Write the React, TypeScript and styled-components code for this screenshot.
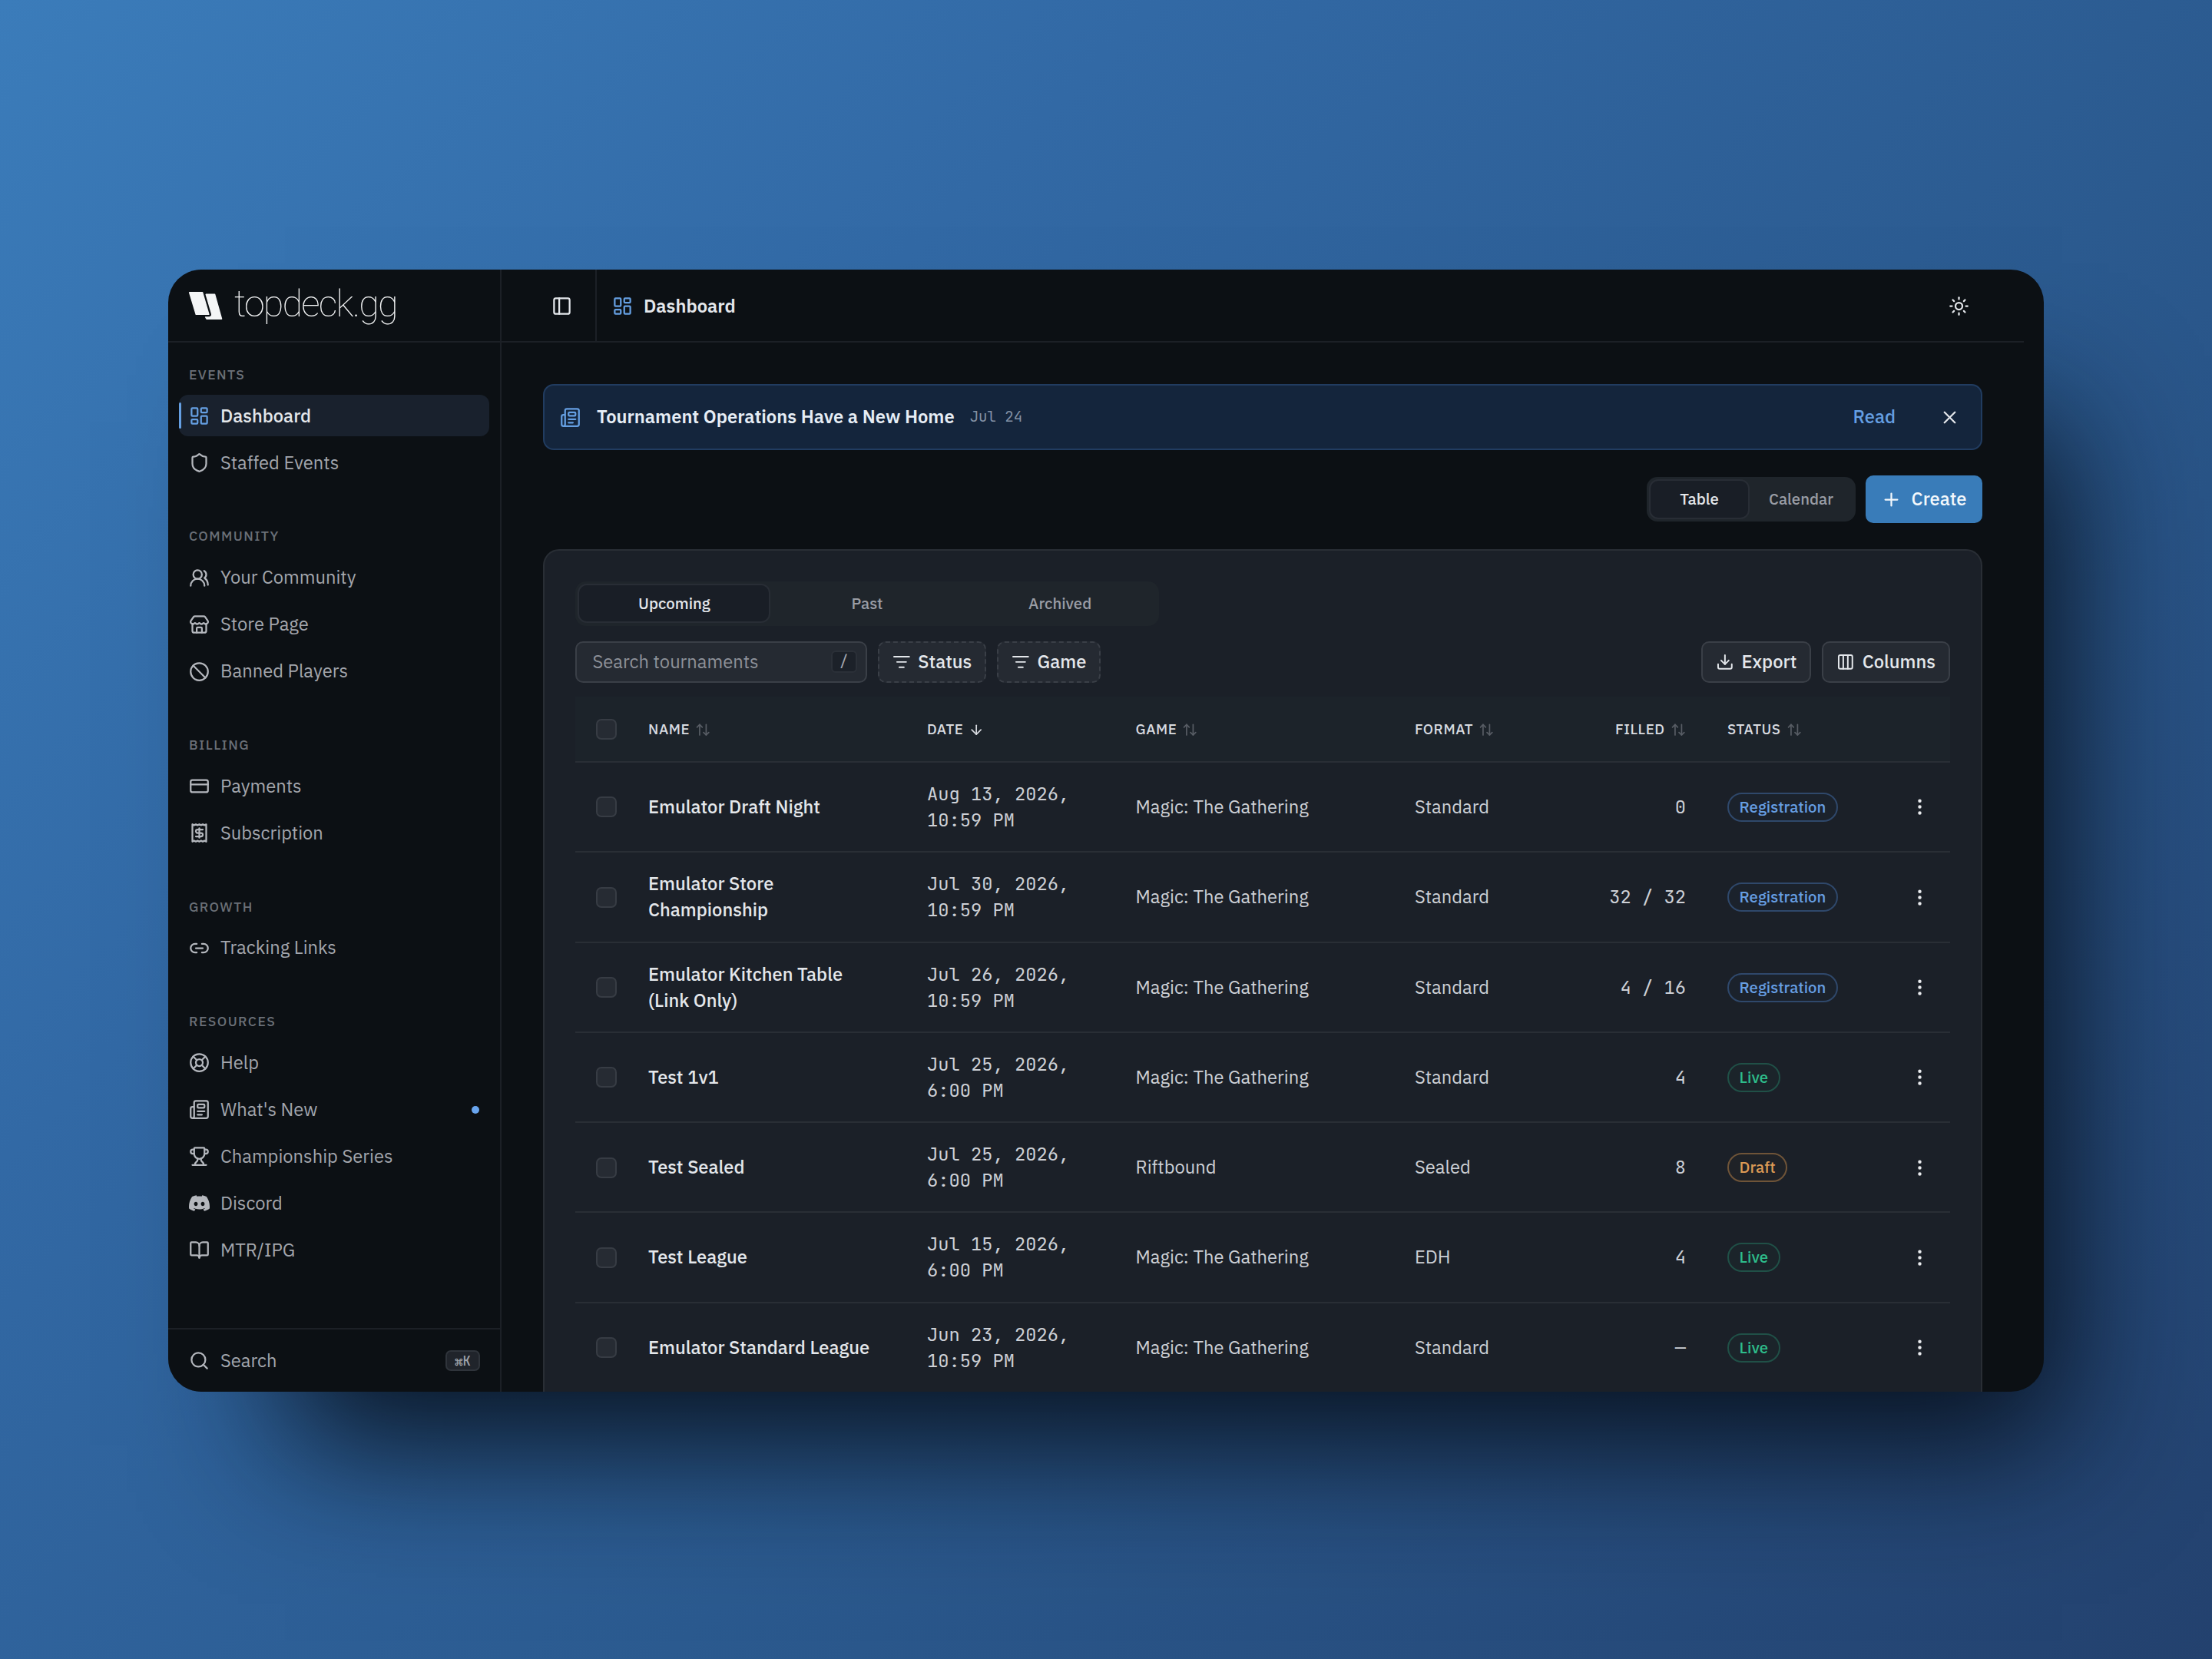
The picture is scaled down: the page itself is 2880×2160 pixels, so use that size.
import React from 'react';
import styled, { createGlobalStyle, css } from 'styled-components';
import {
  ArrowDown,
  ArrowUpDown,
  Ban,
  BookOpen,
  Columns3,
  CreditCard,
  Download,
  EllipsisVertical,
  LayoutDashboard,
  LifeBuoy,
  Link2,
  ListFilter,
  Newspaper,
  PanelLeft,
  Plus,
  Receipt,
  Search,
  Shield,
  Store,
  Sun,
  Trophy,
  UsersRound,
  X,
} from 'lucide-react';
import { SiDiscord } from 'react-icons/si';

const sans = `'IBM Plex Sans', Roboto, 'Open Sans', sans-serif`;
const mono = `'JetBrains Mono', 'Liberation Mono', monospace`;

const c = {
  bg: '#0c1014',
  line: '#1c2026',
  panel: '#1b2028',
  panelLine: '#292e35',
  tableHead: '#1c232a',
  track: '#1f252b',
  control: '#252a32',
  controlLine: '#3a3f47',
  text: '#e4e7eb',
  body: '#cdd0d6',
  nav: '#a3a6ad',
  muted: '#8d9199',
  faint: '#6b7078',
  blue: '#659fe2',
  primary: '#397cb9',
};

const GlobalStyle = createGlobalStyle`
  * { box-sizing: border-box; }
  body { margin: 0; background: #2c5c93; }
`;

/* ---------- stage and window ---------- */

const Stage = styled.div`
  width: 2880px;
  height: 2160px;
  padding: 351px 219px 0;
  overflow: hidden;
  background: linear-gradient(135deg, #3b7cba 0%, #3269a5 30%, #2b5a8f 60%, #23416e 100%);
  font-family: ${sans};
  font-size: 23.74px;
  line-height: 34px;
  color: ${c.text};
`;

const AppWindow = styled.div`
  display: flex;
  width: 2442px;
  height: 1461px;
  border-radius: 43px;
  background: ${c.bg};
  box-shadow: 88px 134px 170px -64px rgba(5, 12, 22, 0.92);
`;

/* ---------- sidebar ---------- */

const Sidebar = styled.aside`
  display: flex;
  flex-direction: column;
  flex: none;
  width: 434px;
  border-right: 2px solid ${c.line};
`;

const Brand = styled.div`
  display: flex;
  align-items: center;
  flex: none;
  height: 95px;
  gap: 14px;
  padding-left: 26px;
  border-bottom: 2px solid ${c.line};
`;

const Wordmark = styled.span`
  margin-top: -3px;
  font-family: Roboto, sans-serif;
  font-weight: 250;
  font-size: 48.5px;
  line-height: 56px;
  letter-spacing: -1.85px;
  color: #f4f5f6;
`;

const Nav = styled.nav`
  display: flex;
  flex-direction: column;
  flex: 1;
  gap: 43.1px;
  padding: 16px 14px 0 14px;
`;

const NavGroup = styled.div`
  display: flex;
  flex-direction: column;
  gap: 6.8px;
`;

const NavLabel = styled.div`
  height: 45.2px;
  padding-left: 13px;
  font-size: 17.6px;
  font-weight: 500;
  line-height: 52px;
  letter-spacing: 1.41px;
  text-transform: uppercase;
  color: ${c.faint};
`;

const NavItem = styled.a<{ $active?: boolean }>`
  position: relative;
  display: flex;
  align-items: center;
  height: 54.3px;
  gap: 14px;
  padding: 1px 13px 0 13px;
  border-radius: 12px;
  color: ${c.nav};
  svg { flex: none; color: #b4b7bd; }
  ${p => p.$active && css`
    background: #19212d;
    color: ${c.text};
    font-weight: 500;
    svg { color: ${c.blue}; }
    &::before {
      content: '';
      position: absolute;
      left: 0;
      top: 10px;
      bottom: 10px;
      width: 3.4px;
      border-radius: 3px;
      background: ${c.blue};
    }
  `}
`;

const UnreadDot = styled.span`
  width: 10px;
  height: 10px;
  margin-left: auto;
  border-radius: 50%;
  background: #69a5ef;
`;

const SidebarFooter = styled.div`
  display: flex;
  align-items: center;
  flex: none;
  height: 83px;
  gap: 14px;
  padding: 0 26px 0 27px;
  border-top: 2px solid ${c.line};
  color: ${c.nav};
  svg { color: #b4b7bd; }
`;

const Kbd = styled.kbd`
  display: flex;
  align-items: center;
  justify-content: center;
  width: 45px;
  height: 27px;
  margin-left: auto;
  border: 2px solid #2f343b;
  border-radius: 7px;
  background: #20242b;
  font: 500 17px/22px ${mono};
  color: #a2a5ac;
`;

/* ---------- main ---------- */

const Main = styled.main`
  display: flex;
  flex-direction: column;
  flex: 1;
  margin-right: 26px;
  overflow: hidden;
`;

const TopBar = styled.header`
  display: flex;
  align-items: stretch;
  flex: none;
  height: 95px;
  border-bottom: 2px solid ${c.line};
`;

const ToggleCell = styled.div`
  display: flex;
  align-items: center;
  width: 124px;
  padding: 1px 0 0 64.5px;
  border-right: 2px solid ${c.line};
`;

const PageTitle = styled.h1`
  display: flex;
  align-items: center;
  flex: 1;
  gap: 14px;
  margin: 0;
  padding: 2px 0 0 20px;
  font-size: 23.74px;
  font-weight: 600;
  svg { color: ${c.blue}; }
`;

const ThemeCell = styled.div`
  display: flex;
  align-items: center;
  padding: 1px 71px 0 0;
`;

const Content = styled.div`
  display: flex;
  flex-direction: column;
  flex: 1;
  min-height: 0;
  padding: 54px 54px 0 54px;
`;

const Banner = styled.section`
  display: flex;
  align-items: center;
  flex: none;
  height: 86px;
  padding: 0 27px 0 20px;
  border: 2px solid #213c60;
  border-radius: 14px;
  background: #14253c;
`;

const BannerTitle = styled.strong`
  margin: 0 20px 0 21px;
  font-weight: 600;
  color: #e6edf5;
`;

const BannerDate = styled.time`
  font: 400 19px/34px ${mono};
  color: #8391a4;
`;

const BannerLink = styled.a`
  margin: 0 57px 0 auto;
  font-weight: 500;
  color: ${c.blue};
`;

const Actions = styled.div`
  display: flex;
  align-items: center;
  justify-content: flex-end;
  flex: none;
  gap: 13px;
  margin: 33px 0 33.5px;
`;

const Segmented = styled.div<{ $flush?: boolean }>`
  display: flex;
  flex: none;
  width: ${p => (p.$flush ? '760px' : '272px')};
  height: 58px;
  padding: 3.4px;
  border-radius: 14px;
  background: ${c.track};
`;

const Segment = styled.div<{ $active?: boolean }>`
  display: flex;
  align-items: center;
  justify-content: center;
  flex: 1 1 auto;
  border: 2px solid transparent;
  border-radius: 12px;
  font-size: 20.35px;
  font-weight: 500;
  color: #9a9da5;
  ${p => p.$active && css`
    border-color: #282d35;
    background: #191e26;
    color: ${c.text};
  `}
`;

const ViewSegment = styled(Segment)`
  flex: none;
  width: ${p => (p.$active ? '131px' : '134px')};
`;

const TabSegment = styled(Segment)`
  flex: 1 1 0;
`;

const PrimaryButton = styled.button`
  display: flex;
  align-items: center;
  height: 62px;
  gap: 12.5px;
  padding: 0 20.5px;
  border: 0;
  border-radius: 10px;
  background: ${c.primary};
  font: 500 23.74px/34px ${sans};
  color: #f3f8fc;
`;

const Panel = styled.section`
  display: flex;
  flex-direction: column;
  flex: 1 0 auto;
  padding: 40px 40px 0;
  border: 2px solid ${c.panelLine};
  border-bottom: 0;
  border-radius: 21px 21px 0 0;
  background: ${c.panel};
`;

const Toolbar = styled.div`
  display: flex;
  align-items: center;
  gap: 13.6px;
  margin: 20.3px 0 18.4px;
`;

const Spacer = styled.span`
  flex: 1;
`;

const SearchBox = styled.label`
  display: flex;
  align-items: center;
  justify-content: space-between;
  width: 380px;
  height: 54.3px;
  padding: 0 11.5px 0 20.5px;
  border: 2px solid ${c.controlLine};
  border-radius: 10px;
  background: ${c.control};
  color: ${c.muted};
`;

const SlashKey = styled.kbd`
  display: flex;
  align-items: center;
  justify-content: center;
  width: 34px;
  height: 29px;
  border: 2px solid #2b3038;
  border-radius: 6px;
  background: #1c2129;
  font: 400 18.66px/24px ${mono};
  color: #a5a8af;
`;

const ToolButton = styled.button<{ $dashed?: boolean }>`
  display: flex;
  align-items: center;
  height: 54.3px;
  gap: 10px;
  padding: 0 17px;
  border: 2px ${p => (p.$dashed ? 'dashed' : 'solid')} ${c.controlLine};
  border-radius: 10px;
  background: ${c.control};
  font: 500 23.74px/34px ${sans};
  color: ${c.text};
`;

/* ---------- table ---------- */

const gridColumns = css`
  display: grid;
  grid-template-columns: 68px 363px 271.5px 363.5px 203.5px 203.5px 237.5px 79px;
  align-items: center;
`;

const HeadRow = styled.div`
  ${gridColumns}
  height: 85.5px;
  border-bottom: 2px solid ${c.panelLine};
  background: ${c.tableHead};
`;

const Row = styled.div`
  ${gridColumns}
  height: 117.3px;
  padding-top: 0.6px;
  border-bottom: 2px solid ${c.panelLine};
`;

const HeadCell = styled.div<{ $end?: boolean; $sorted?: boolean }>`
  display: flex;
  align-items: center;
  justify-content: ${p => (p.$end ? 'flex-end' : 'flex-start')};
  gap: 7px;
  padding: 0 27px;
  font-size: 18.66px;
  font-weight: 500;
  letter-spacing: 0.56px;
  color: #d8dbe0;
  svg {
    flex: none;
    margin-top: 1.5px;
    color: ${p => (p.$sorted ? '#d8dbe0' : '#585d65')};
  }
`;

const Cell = styled.div<{ $strong?: boolean; $mono?: boolean; $end?: boolean }>`
  padding: 0 27px;
  color: ${p => (p.$strong ? c.text : c.body)};
  font-weight: ${p => (p.$strong ? 500 : 400)};
  font-family: ${p => (p.$mono ? mono : sans)};
  text-align: ${p => (p.$end ? 'right' : 'left')};
`;

const MenuCell = styled.div`
  display: flex;
  justify-content: center;
  color: #e9ebee;
`;

const Checkbox = styled.span`
  display: block;
  width: 27px;
  height: 27px;
  border: 2px solid #373c44;
  border-radius: 7px;
  background: #262b33;
`;

type Tone = 'Registration' | 'Live' | 'Draft';

const tones: Record<Tone, { text: string; line: string; fill: string }> = {
  Registration: { text: '#669ee2', line: '#2f486b', fill: '#1b222c' },
  Live: { text: '#2ebd8b', line: '#205047', fill: '#1b242a' },
  Draft: { text: '#dd9a55', line: '#6f5438', fill: '#1f2227' },
};

const Badge = styled.span<{ $tone: Tone }>`
  display: inline-flex;
  align-items: center;
  height: 38px;
  padding: 0 13.6px;
  border: 2px solid ${p => tones[p.$tone].line};
  border-radius: 19px;
  background: ${p => tones[p.$tone].fill};
  font-size: 20.35px;
  font-weight: 500;
  color: ${p => tones[p.$tone].text};
  vertical-align: middle;
`;

/* ---------- data ---------- */

type Icon = React.ComponentType<{ size?: number }>;

const groups: { label: string; items: { icon: Icon; text: string; active?: boolean; unread?: boolean }[] }[] = [
  {
    label: 'Events',
    items: [
      { icon: LayoutDashboard, text: 'Dashboard', active: true },
      { icon: Shield, text: 'Staffed Events' },
    ],
  },
  {
    label: 'Community',
    items: [
      { icon: UsersRound, text: 'Your Community' },
      { icon: Store, text: 'Store Page' },
      { icon: Ban, text: 'Banned Players' },
    ],
  },
  {
    label: 'Billing',
    items: [
      { icon: CreditCard, text: 'Payments' },
      { icon: Receipt, text: 'Subscription' },
    ],
  },
  { label: 'Growth', items: [{ icon: Link2, text: 'Tracking Links' }] },
  {
    label: 'Resources',
    items: [
      { icon: LifeBuoy, text: 'Help' },
      { icon: Newspaper, text: "What's New", unread: true },
      { icon: Trophy, text: 'Championship Series' },
      { icon: SiDiscord as Icon, text: 'Discord' },
      { icon: BookOpen, text: 'MTR/IPG' },
    ],
  },
];

const events: { name: string; date: string; game: string; format: string; filled: string; status: Tone }[] = [
  { name: 'Emulator Draft Night', date: 'Aug 13, 2026, 10:59 PM', game: 'Magic: The Gathering', format: 'Standard', filled: '0', status: 'Registration' },
  { name: 'Emulator Store Championship', date: 'Jul 30, 2026, 10:59 PM', game: 'Magic: The Gathering', format: 'Standard', filled: '32 / 32', status: 'Registration' },
  { name: 'Emulator Kitchen Table (Link Only)', date: 'Jul 26, 2026, 10:59 PM', game: 'Magic: The Gathering', format: 'Standard', filled: '4 / 16', status: 'Registration' },
  { name: 'Test 1v1', date: 'Jul 25, 2026, 6:00 PM', game: 'Magic: The Gathering', format: 'Standard', filled: '4', status: 'Live' },
  { name: 'Test Sealed', date: 'Jul 25, 2026, 6:00 PM', game: 'Riftbound', format: 'Sealed', filled: '8', status: 'Draft' },
  { name: 'Test League', date: 'Jul 15, 2026, 6:00 PM', game: 'Magic: The Gathering', format: 'EDH', filled: '4', status: 'Live' },
  { name: 'Emulator Standard League', date: 'Jun 23, 2026, 10:59 PM', game: 'Magic: The Gathering', format: 'Standard', filled: '—', status: 'Live' },
];

const LogoMark = () => (
  <svg width="46" height="38" viewBox="0 0 46 38" fill="#f4f5f6" stroke="#f4f5f6" strokeWidth="1.4" strokeLinejoin="round">
    <path d="M1.6 1.8H18.6L26.9 30.3H10.2Z" />
    <path d="M23.2 4.3H34.6L43.6 36.2H24L22.6 33.9H27.4Q31.4 33.2 30.6 29.6Z" />
  </svg>
);

const Column = ({ label, end, sorted }: { label: string; end?: boolean; sorted?: boolean }) => (
  <HeadCell $end={end} $sorted={sorted}>
    {label}
    {sorted ? <ArrowDown size={20.35} /> : <ArrowUpDown size={20.35} />}
  </HeadCell>
);

export default function App() {
  return (
    <>
      <GlobalStyle />
      <Stage>
        <AppWindow>
          <Sidebar>
            <Brand>
              <LogoMark />
              <Wordmark>topdeck.gg</Wordmark>
            </Brand>
            <Nav>
              {groups.map(group => (
                <NavGroup key={group.label}>
                  <NavLabel>{group.label}</NavLabel>
                  {group.items.map(({ icon: ItemIcon, text, active, unread }) => (
                    <NavItem key={text} $active={active}>
                      <ItemIcon size={27} />
                      {text}
                      {unread && <UnreadDot />}
                    </NavItem>
                  ))}
                </NavGroup>
              ))}
            </Nav>
            <SidebarFooter>
              <Search size={27} />
              Search
              <Kbd>⌘K</Kbd>
            </SidebarFooter>
          </Sidebar>
          <Main>
            <TopBar>
              <ToggleCell>
                <PanelLeft size={27} />
              </ToggleCell>
              <PageTitle>
                <LayoutDashboard size={27} />
                Dashboard
              </PageTitle>
              <ThemeCell>
                <Sun size={27} />
              </ThemeCell>
            </TopBar>
            <Content>
              <Banner>
                <Newspaper size={27} color={c.blue} />
                <BannerTitle>Tournament Operations Have a New Home</BannerTitle>
                <BannerDate>Jul 24</BannerDate>
                <BannerLink>Read</BannerLink>
                <X size={27} />
              </Banner>
              <Actions>
                <Segmented>
                  <ViewSegment $active>Table</ViewSegment>
                  <ViewSegment>Calendar</ViewSegment>
                </Segmented>
                <PrimaryButton>
                  <Plus size={27} />
                  Create
                </PrimaryButton>
              </Actions>
              <Panel>
                <Segmented $flush>
                  <TabSegment $active>Upcoming</TabSegment>
                  <TabSegment>Past</TabSegment>
                  <TabSegment>Archived</TabSegment>
                </Segmented>
                <Toolbar>
                  <SearchBox>
                    Search tournaments
                    <SlashKey>/</SlashKey>
                  </SearchBox>
                  <ToolButton $dashed>
                    <ListFilter size={23.74} />
                    Status
                  </ToolButton>
                  <ToolButton $dashed>
                    <ListFilter size={23.74} />
                    Game
                  </ToolButton>
                  <Spacer />
                  <ToolButton>
                    <Download size={23.74} />
                    Export
                  </ToolButton>
                  <ToolButton>
                    <Columns3 size={23.74} />
                    Columns
                  </ToolButton>
                </Toolbar>
                <HeadRow>
                  <Cell>
                    <Checkbox />
                  </Cell>
                  <Column label="NAME" />
                  <Column label="DATE" sorted />
                  <Column label="GAME" />
                  <Column label="FORMAT" />
                  <Column label="FILLED" end />
                  <Column label="STATUS" />
                </HeadRow>
                {events.map(event => (
                  <Row key={event.name}>
                    <Cell>
                      <Checkbox />
                    </Cell>
                    <Cell $strong>{event.name}</Cell>
                    <Cell $mono>{event.date}</Cell>
                    <Cell>{event.game}</Cell>
                    <Cell>{event.format}</Cell>
                    <Cell $mono $end>{event.filled}</Cell>
                    <Cell>
                      <Badge $tone={event.status}>{event.status}</Badge>
                    </Cell>
                    <MenuCell>
                      <EllipsisVertical size={27} />
                    </MenuCell>
                  </Row>
                ))}
              </Panel>
            </Content>
          </Main>
        </AppWindow>
      </Stage>
    </>
  );
}
